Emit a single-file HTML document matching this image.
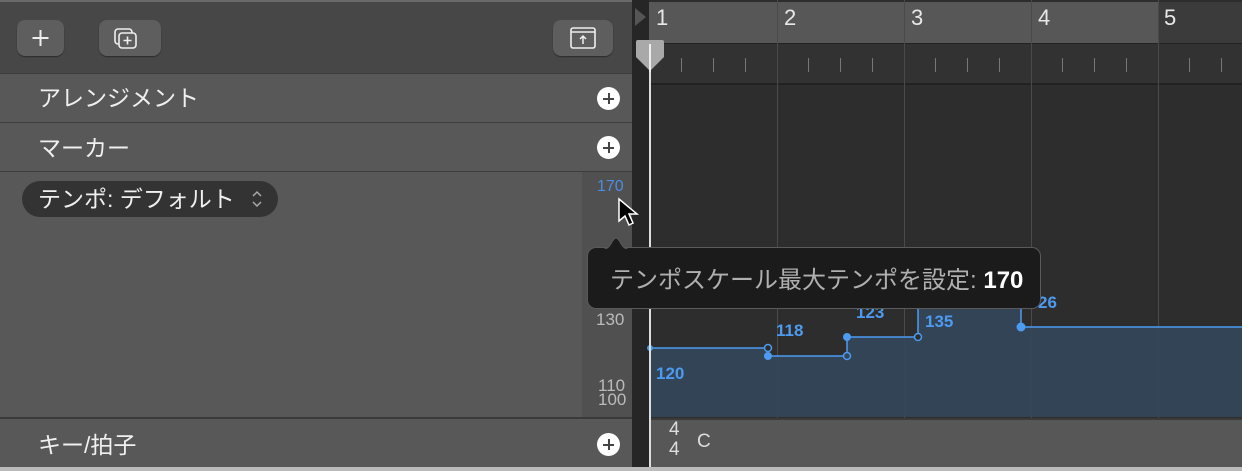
<!DOCTYPE html>
<html><head><meta charset="utf-8"><style>
*{margin:0;padding:0;box-sizing:border-box}
body{width:1242px;height:471px;overflow:hidden;background:#2d2d2d;position:relative;font-family:"Liberation Sans","Noto Sans CJK JP",sans-serif;color:#eee}
div,span{position:absolute}
.btn{top:20px;height:36px;background:#5e5e5e;border-radius:8px;box-shadow:0 1px 1px rgba(0,0,0,.4)}
.row{left:0;width:632px;background:#585858;border-top:1px solid #3e3e3e}
.lbl{font-size:23px;color:#f0f0f0;left:38px;white-space:nowrap}
.plus{width:23px;height:23px;border-radius:50%;background:#fff;left:597px}
.plus:before,.plus:after{content:"";position:absolute;background:#444;left:6px;top:10.5px;width:11px;height:2px}
.plus:after{left:10.5px;top:6px;width:2px;height:11px}
.vl{top:0;width:1px;background:#4a4a4a}
.bn{font-size:22px;color:#e8e8e8;top:5px}
.tk{top:58px;width:1px;height:14px;background:#777}
.bl{color:#4c9bf0;font-size:17px;font-weight:bold}
.gl{color:#bbb;font-size:17px}
</style></head><body>
<div style="left:0;top:0;width:632px;height:74px;background:#474747;border-top:2px solid #6a6a6a"></div>
<div class="btn" style="left:17px;width:47px;"><svg width="47" height="36"><path d="M23.5 10v16M15.5 18h16" stroke="#eee" stroke-width="2"/></svg></div>
<div class="btn" style="left:99px;width:62px;"><svg width="62" height="36"><rect x="16" y="9" width="17" height="15" rx="3" fill="none" stroke="#eee" stroke-width="1.6"/><rect x="20" y="13" width="17" height="15" rx="3" fill="#5e5e5e" stroke="#eee" stroke-width="1.6"/><path d="M28.5 16.5v8M24.5 20.5h8" stroke="#eee" stroke-width="1.6"/></svg></div>
<div class="btn" style="left:553px;width:60px;"><svg width="60" height="36"><rect x="18" y="8" width="24" height="20" rx="2" fill="none" stroke="#eee" stroke-width="1.6"/><path d="M18 12h24M30 24v-8M27 19l3-3 3 3" stroke="#eee" stroke-width="1.5" fill="none"/></svg></div>
<div class="row" style="top:73px;height:49px"><span class="lbl" style="top:5px">アレンジメント</span><span class="plus" style="top:13px"></span></div>
<div class="row" style="top:122px;height:50px"><span class="lbl" style="top:6px">マーカー</span><span class="plus" style="top:13px"></span></div>
<div class="row" style="top:171px;height:247px">
 <span style="left:582px;top:0;width:50px;height:247px;background:#505050"></span>
 <span style="left:22px;top:9px;width:256px;height:36px;border-radius:18px;background:#333"></span>
 <span class="lbl" style="left:38px;top:8px">テンポ: デフォルト</span>
 <svg style="position:absolute;left:250px;top:15px" width="14" height="24"><path d="M3 9l4-4 4 4M3 15l4 4 4-4" stroke="#aaa" stroke-width="1.5" fill="none"/></svg>
 <span style="left:597px;top:6px;font-size:16px;color:#4c8ee0">170</span>
 <span class="gl" style="left:596px;top:138px">130</span>
 <span class="gl" style="left:598px;top:207px;line-height:14px">110<br>100</span>
</div>
<div class="row" style="top:417px;height:51px;border-top:2px solid #3a3a3a"><span class="lbl" style="top:7px">キー/拍子</span><span class="plus" style="top:14px"></span></div>
<div style="left:0;top:467px;width:1242px;height:4px;background:#bbb"></div>
<div style="left:632px;top:0;width:17px;height:467px;background:#262626"></div>
<div style="left:649px;top:2px;width:593px;height:41px;background:#3b3b3b"></div>
<div style="left:649px;top:2px;width:509px;height:41px;background:#575757"></div>
<div style="left:649px;top:43px;width:593px;height:42px;background:#323232;border-top:1px solid #222;border-bottom:2px solid #222"></div>
<svg style="position:absolute;left:633px;top:6px" width="14" height="22"><path d="M2 2l11 9-11 9z" fill="#555"/></svg>
<div class="vl" style="left:777px;height:418px"></div>
<div class="vl" style="left:904px;height:418px"></div>
<div class="vl" style="left:1031px;height:418px"></div>
<div class="vl" style="left:1158px;height:418px"></div>
<span class="bn" style="left:656px">1</span><span class="bn" style="left:784px">2</span><span class="bn" style="left:911px">3</span><span class="bn" style="left:1038px">4</span><span class="bn" style="left:1164px">5</span>
<div class="tk" style="left:681px"></div><div class="tk" style="left:713px"></div><div class="tk" style="left:745px"></div>
<div class="tk" style="left:808px"></div><div class="tk" style="left:840px"></div><div class="tk" style="left:872px"></div>
<div class="tk" style="left:935px"></div><div class="tk" style="left:967px"></div><div class="tk" style="left:999px"></div>
<div class="tk" style="left:1062px"></div><div class="tk" style="left:1094px"></div><div class="tk" style="left:1126px"></div>
<div class="tk" style="left:1189px"></div><div class="tk" style="left:1221px"></div>
<svg style="position:absolute;left:0;top:0" width="1242" height="420">
 <path d="M650 348H768V356H847V337H918V300H1021V327H1242V417H650Z" fill="#344659" opacity=".95"/>
 <g stroke="#4c9bf0" stroke-width="1.5" fill="none">
  <path d="M650 348H768V356H847V337H918V300M1021 300V327H1242"/>
 </g>
 <circle cx="650" cy="348" r="3" fill="#4c9bf0"/>
 <circle cx="768" cy="348" r="3.5" fill="#2d2d2d" stroke="#4c9bf0" stroke-width="1.5"/>
 <circle cx="768" cy="356" r="4" fill="#4c9bf0"/>
 <circle cx="847" cy="356" r="3.5" fill="#344659" stroke="#4c9bf0" stroke-width="1.5"/>
 <circle cx="847" cy="337" r="4" fill="#4c9bf0"/>
 <circle cx="918" cy="337" r="3.5" fill="#2d2d2d" stroke="#4c9bf0" stroke-width="1.5"/>
 <circle cx="1021" cy="327" r="4.5" fill="#4c9bf0"/>
</svg>
<span class="bl" style="left:776px;top:321px">118</span>
<span class="bl" style="left:856px;top:303px">123</span>
<span class="bl" style="left:925px;top:312px">135</span>
<span class="bl" style="left:1038px;top:293px">26</span>
<span class="bl" style="left:656px;top:364px">120</span>
<div style="left:649px;top:418px;width:593px;height:49px;background:#575757;border-top:2px solid #3a3a3a"></div>
<span style="left:669px;top:420px;font-size:19px;color:#ddd;line-height:20px">4<br>4</span>
<span style="left:697px;top:431px;font-size:19px;color:#ddd">C</span>
<div style="left:649px;top:50px;width:2px;height:417px;background:#ddd"></div>
<svg style="position:absolute;left:634px;top:38px" width="32" height="34"><path d="M4 2h24a2 2 0 0 1 2 2v15l-14 14-14-14V4a2 2 0 0 1 2-2z" fill="#a9a9a9"/><path d="M16 6v28" stroke="#eee" stroke-width="2"/></svg>
<div style="left:587px;top:247px;width:454px;height:62px;background:#1b1b1b;border:1px solid #5a5a5a;border-radius:9px"></div>
<svg style="position:absolute;left:604px;top:236px" width="24" height="14"><path d="M0 13C7 13 8 2 12 2S17 13 24 13" fill="#1b1b1b" stroke="#5a5a5a" stroke-width="1"/><path d="M0 14h24" stroke="#1b1b1b" stroke-width="2"/></svg>
<span style="left:610px;top:260px;font-size:24px;color:#b0b0b0;white-space:nowrap">テンポスケール最大テンポを設定: <span style="position:static;color:#fff;font-weight:600">170</span></span>
<svg style="position:absolute;left:617px;top:197px" width="24" height="32"><path d="M2 2v22l6-5 4 9 4-2-4-9h8z" fill="#000" stroke="#fff" stroke-width="1.5"/></svg>
</body></html>
